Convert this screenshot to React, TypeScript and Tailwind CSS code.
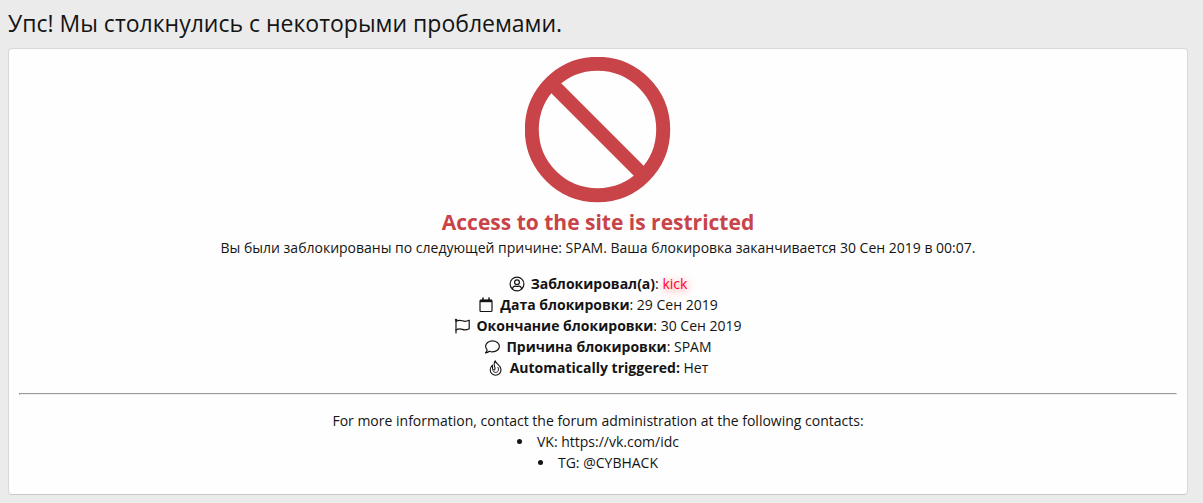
import type { ReactNode } from "react";

interface DetailProps {
  icon: ReactNode;
  label: string;
  boldColon?: boolean;
  children: ReactNode;
}

function Icon({ children }: { children: ReactNode }) {
  return (
    <svg
      viewBox="0 0 16 16"
      fill="none"
      stroke="currentColor"
      strokeLinecap="round"
      strokeLinejoin="round"
      aria-hidden="true"
      className="size-4 shrink-0"
    >
      {children}
    </svg>
  );
}

function BanIcon() {
  return (
    <svg
      viewBox="0 0 146 146"
      fill="none"
      stroke="currentColor"
      strokeWidth="14"
      aria-hidden="true"
      className="size-[146px] text-[#c84448]"
    >
      <circle cx="72.5" cy="72.5" r="65.7" />
      <path d="M26.5 26.5 119.5 119.5" />
    </svg>
  );
}

function UserIcon() {
  return (
    <Icon>
      <circle cx="8" cy="8" r="6.9" strokeWidth="1.2" />
      <circle cx="8" cy="6.3" r="2.4" strokeWidth="1.2" />
      <path
        d="M3.4 12.8c.4-1.7 1.4-2.6 2.7-2.6.7 0 1 .3 1.9.3s1.2-.3 1.9-.3c1.3 0 2.3.9 2.7 2.6"
        strokeWidth="1.2"
      />
    </Icon>
  );
}

function CalendarIcon() {
  return (
    <Icon>
      <rect x="2" y="3" width="12" height="11.5" rx="1" strokeWidth="1.2" />
      <path d="M2 4h12" strokeWidth="2.4" strokeLinecap="butt" />
      <path d="M5 1v2M11 1v2" strokeWidth="1.5" />
    </Icon>
  );
}

function FlagIcon() {
  return (
    <Icon>
      <path d="M2 1.5V15" strokeWidth="1.2" />
      <path
        d="M2 3.3c1.3-.7 2.5-1 3.9-1 2 0 3 1 5 1 1.4 0 2.8-.4 4.3-1.1v8.5c-1.5.8-2.9 1.2-4.3 1.2-2 0-3-1-5-1-1.5 0-2.6.3-3.9 1.2"
        strokeWidth="1.2"
      />
      <circle cx="2" cy="1.8" r=".8" fill="currentColor" strokeWidth=".6" />
    </Icon>
  );
}

function CommentIcon() {
  return (
    <Icon>
      <path
        d="M8.5 1.800c3.800 0 6.900 2.500 6.900 5.500s-3.100 5.500-6.900 5.500c-1.100 0-2.200-.2-3.100-.6-1 .9-2.200 1.600-3.900 1.700.8-.9 1.500-1.800 1.700-3-1-1-1.600-2.200-1.600-3.600 0-3 3.100-5.500 6.900-5.500Z"
        strokeWidth="1.2"
      />
    </Icon>
  );
}

function FireIcon() {
  return (
    <Icon>
      <path
        d="M7.2.8c.6 2.9 5.8 4.7 5.8 8.8a5.4 5.4 0 0 1-5.4 5.6 5.4 5.4 0 0 1-5.4-5.5c0-2 1-3.3 2.3-4.6v3.500c0 .8.5 1.400 1.300 1.400.7 0 1.200-.5 1.200-1.300C7 6.700 4.900 3.700 7.200.8Z"
        strokeWidth="1.1"
      />
      <path d="M9.900 7.400c1.400 2.200.4 5-2.200 5-1.300 0-2.200-.6-2.700-1.500" strokeWidth="1" />
    </Icon>
  );
}

function Detail({ icon, label, boldColon, children }: DetailProps) {
  return (
    <div className="flex items-center justify-center gap-1.5">
      {icon}
      <p>
        <b>
          {label}
          {boldColon && ":"}
        </b>
        {!boldColon && ":"} {children}
      </p>
    </div>
  );
}

export default function App() {
  return (
    <div className="min-h-screen bg-[#ebebeb] py-2 pr-[15px] pl-2 font-['Open_Sans','Noto_Sans',sans-serif] text-sm leading-[21px] text-[#141414]">
      <h1 className="mb-[10px] text-[23px] leading-[30px]">Упс! Мы столкнулись с некоторыми проблемами.</h1>

      <main className="rounded border border-[#d8d8d8] border-b-[#c8c8c8] bg-[#fefefe] px-2.5 pt-2 pb-[21px] text-center">
        <div className="flex justify-center">
          <BanIcon />
        </div>
        <h2 className="pt-1 text-[21px] leading-[30px] font-bold text-[#c84448]">Access to the site is restricted</h2>
        <p>Вы были заблокированы по следующей причине: SPAM. Ваша блокировка заканчивается 30 Сен 2019 в 00:07.</p>

        <div className="mt-[15px]">
          <Detail icon={<UserIcon />} label="Заблокировал(а)">
            <a href="#kick" className="text-[#ff0030] [text-shadow:1px_2px_8px_#ff000099]">
              kick
            </a>
          </Detail>
          <Detail icon={<CalendarIcon />} label="Дата блокировки">
            29 Сен 2019
          </Detail>
          <Detail icon={<FlagIcon />} label="Окончание блокировки">
            30 Сен 2019
          </Detail>
          <Detail icon={<CommentIcon />} label="Причина блокировки">
            SPAM
          </Detail>
          <Detail icon={<FireIcon />} label="Automatically triggered" boldColon>
            Нет
          </Detail>
        </div>

        <hr className="my-[15px] border border-[#9a9a9a] border-r-[#eeeeee] border-b-[#eeeeee]" />

        <p>For more information, contact the forum administration at the following contacts:</p>
        <ul className="list-inside list-disc">
          <li>VK: https://vk.com/idc</li>
          <li>TG: @CYBHACK</li>
        </ul>
      </main>
    </div>
  );
}
